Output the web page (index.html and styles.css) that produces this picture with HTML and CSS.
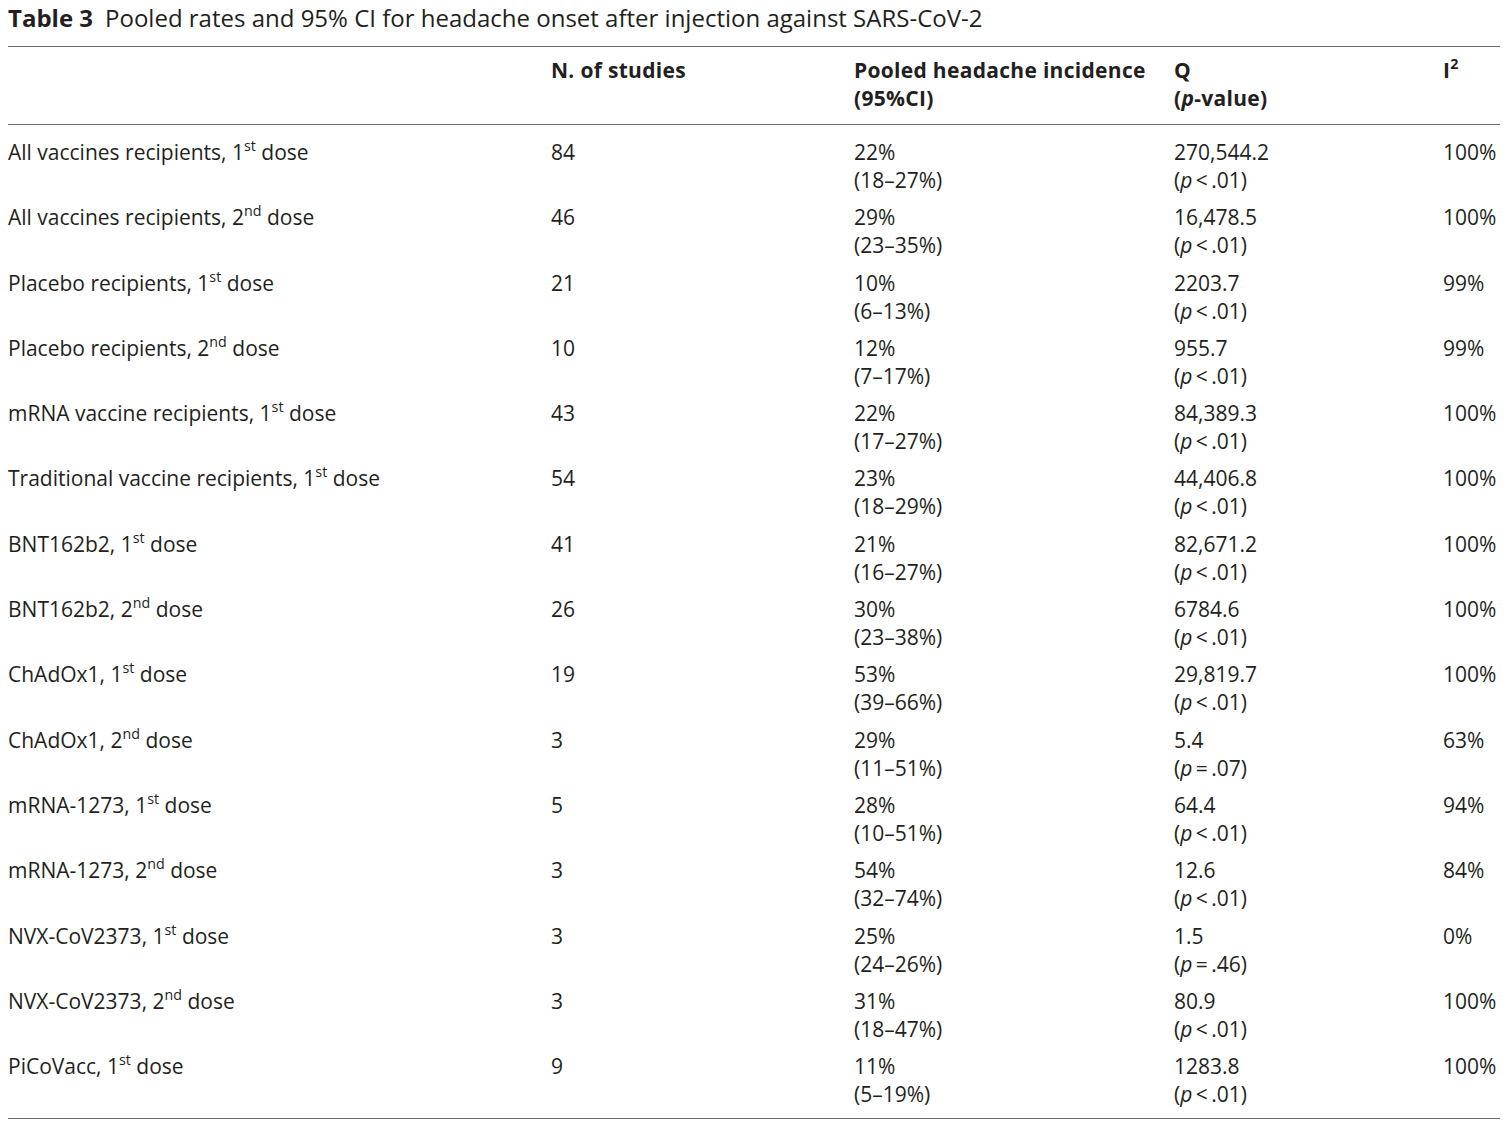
FILE: index.html
```html
<!DOCTYPE html>
<html>
<head>
<meta charset="utf-8">
<link rel="stylesheet" href="styles.css">
</head>
<body>
<div class="caption"><span class="label">Table 3</span><span class="title">Pooled rates and 95% CI for headache onset after injection against SARS-CoV-2</span></div>
<table class="tbl">
<thead>
<tr>
<th class="c1"></th>
<th class="c2">N. of studies</th>
<th class="c3">Pooled headache incidence<br>(95%CI)</th>
<th class="c4">Q<br>(<i>p</i>-value)</th>
<th class="c5">I<sup>2</sup></th>
</tr>
</thead>
<tbody>
<tr><td>All vaccines recipients, 1<sup>st</sup> dose</td><td>84</td><td>22%<br>(18–27%)</td><td>270,544.2<br>(<i>p</i>&thinsp;&lt;&thinsp;.01)</td><td>100%</td></tr>
<tr><td>All vaccines recipients, 2<sup>nd</sup> dose</td><td>46</td><td>29%<br>(23–35%)</td><td>16,478.5<br>(<i>p</i>&thinsp;&lt;&thinsp;.01)</td><td>100%</td></tr>
<tr><td>Placebo recipients, 1<sup>st</sup> dose</td><td>21</td><td>10%<br>(6–13%)</td><td>2203.7<br>(<i>p</i>&thinsp;&lt;&thinsp;.01)</td><td>99%</td></tr>
<tr><td>Placebo recipients, 2<sup>nd</sup> dose</td><td>10</td><td>12%<br>(7–17%)</td><td>955.7<br>(<i>p</i>&thinsp;&lt;&thinsp;.01)</td><td>99%</td></tr>
<tr><td>mRNA vaccine recipients, 1<sup>st</sup> dose</td><td>43</td><td>22%<br>(17–27%)</td><td>84,389.3<br>(<i>p</i>&thinsp;&lt;&thinsp;.01)</td><td>100%</td></tr>
<tr><td>Traditional vaccine recipients, 1<sup>st</sup> dose</td><td>54</td><td>23%<br>(18–29%)</td><td>44,406.8<br>(<i>p</i>&thinsp;&lt;&thinsp;.01)</td><td>100%</td></tr>
<tr><td>BNT162b2, 1<sup>st</sup> dose</td><td>41</td><td>21%<br>(16–27%)</td><td>82,671.2<br>(<i>p</i>&thinsp;&lt;&thinsp;.01)</td><td>100%</td></tr>
<tr><td>BNT162b2, 2<sup>nd</sup> dose</td><td>26</td><td>30%<br>(23–38%)</td><td>6784.6<br>(<i>p</i>&thinsp;&lt;&thinsp;.01)</td><td>100%</td></tr>
<tr><td>ChAdOx1, 1<sup>st</sup> dose</td><td>19</td><td>53%<br>(39–66%)</td><td>29,819.7<br>(<i>p</i>&thinsp;&lt;&thinsp;.01)</td><td>100%</td></tr>
<tr><td>ChAdOx1, 2<sup>nd</sup> dose</td><td>3</td><td>29%<br>(11–51%)</td><td>5.4<br>(<i>p</i>&thinsp;=&thinsp;.07)</td><td>63%</td></tr>
<tr><td>mRNA-1273, 1<sup>st</sup> dose</td><td>5</td><td>28%<br>(10–51%)</td><td>64.4<br>(<i>p</i>&thinsp;&lt;&thinsp;.01)</td><td>94%</td></tr>
<tr><td>mRNA-1273, 2<sup>nd</sup> dose</td><td>3</td><td>54%<br>(32–74%)</td><td>12.6<br>(<i>p</i>&thinsp;&lt;&thinsp;.01)</td><td>84%</td></tr>
<tr><td>NVX-CoV2373, 1<sup>st</sup> dose</td><td>3</td><td>25%<br>(24–26%)</td><td>1.5<br>(<i>p</i>&thinsp;=&thinsp;.46)</td><td>0%</td></tr>
<tr><td>NVX-CoV2373, 2<sup>nd</sup> dose</td><td>3</td><td>31%<br>(18–47%)</td><td>80.9<br>(<i>p</i>&thinsp;&lt;&thinsp;.01)</td><td>100%</td></tr>
<tr><td>PiCoVacc, 1<sup>st</sup> dose</td><td>9</td><td>11%<br>(5–19%)</td><td>1283.8<br>(<i>p</i>&thinsp;&lt;&thinsp;.01)</td><td>100%</td></tr>
</tbody>
</table>
</body>
</html>
```
FILE: styles.css
```css
html, body {
  margin: 0;
  background: #fff;
}
body {
  padding: 0 10px 0 8px;
  font-family: "Open Sans", "Liberation Sans", sans-serif;
  color: #231f20;
}
.caption {
  height: 46px;
  font-size: 24px;
  line-height: 36px;
  white-space: nowrap;
}
.label {
  font-weight: 700;
  margin-right: 12px;
}
.tbl {
  width: 100%;
  border-collapse: collapse;
  font-size: 21px;
  line-height: 28px;
  border-top: 1.5px solid #6b6b6b;
  border-bottom: 1.5px solid #6b6b6b;
}
.tbl th {
  text-align: left;
  vertical-align: top;
  font-weight: 700;
  letter-spacing: 0.3px;
  padding: 9px 0 12px 0;
  border-bottom: 1.5px solid #6b6b6b;
}
.tbl td {
  vertical-align: top;
  padding: 13px 0 8.3px 0;
  white-space: nowrap;
}
.tbl tbody tr + tr td {
  padding-top: 1px;
}
.tbl tbody tr:last-child td {
  padding-bottom: 10px;
}
.c1 { width: 543px; }
.c2 { width: 303px; }
.c3 { width: 320px; }
.c4 { width: 269px; }
sup {
  font-size: 0.68em;
  line-height: 0;
  vertical-align: 0.6em;
}
```
